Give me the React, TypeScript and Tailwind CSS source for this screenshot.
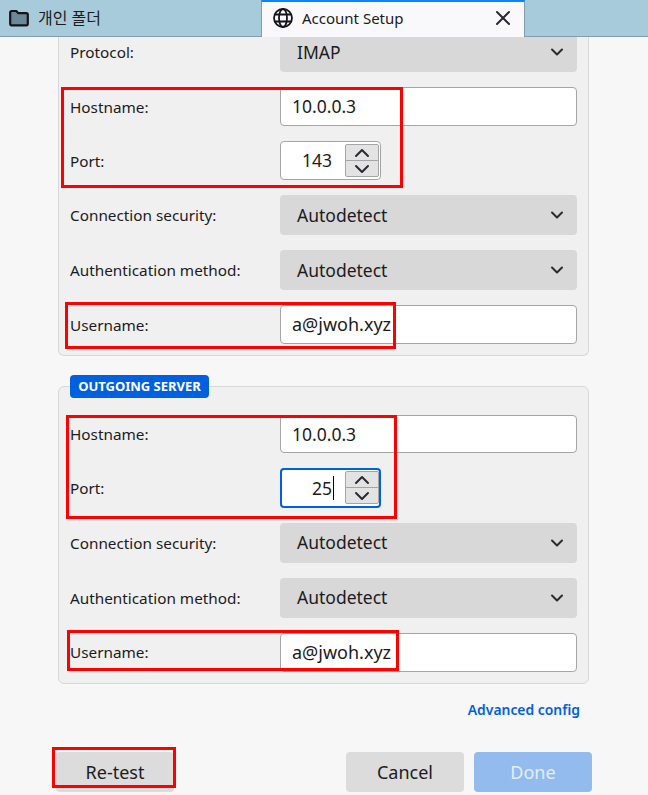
import { ChevronDown, ChevronUp, X } from "lucide-react";

const font = "[font-family:'Noto_Sans','Noto_Sans_CJK_KR',sans-serif]";

function Row({ label, children }: { label: string; children: React.ReactNode }) {
    return (
        <div className="flex items-center">
            <div className="w-[221px] shrink-0 pl-[11px] pt-[1px] text-[15.3px] text-[#1c1b22]">{label}</div>
            {children}
        </div>
    );
}

function SelectBox({ value }: { value: string }) {
    return (
        <div className="flex h-10 w-[297px] items-center justify-between rounded-[4px] bg-[#d8d8d8] pl-[17px] pr-[10px] text-[17.5px] text-[#1c1b22]">
            <span>{value}</span>
            <ChevronDown className="h-5 w-5 shrink-0 text-[#2b2a33]" strokeWidth={2.4} />
        </div>
    );
}

function TextBox({ value, className }: { value: string; className: string }) {
    return (
        <div className={"flex w-[297px] items-center rounded-[4px] border border-[#a5a5a5] bg-white pl-[11px] text-[#1c1b22] " + className}>
            {value}
        </div>
    );
}

function PortBox({ value, focused }: { value: string; focused?: boolean }) {
    return (
        <div
            className={
                focused
                    ? "flex h-[39.5px] w-[101px] items-center justify-between rounded-[4px] border-2 border-[#0060df] bg-white text-[17.5px] text-[#1c1b22]"
                    : "flex h-[39px] w-[101px] items-center justify-between rounded-[4px] border border-[#a5a5a5] bg-white pr-[1px] text-[17.5px] text-[#1c1b22]"
            }
        >
            <div className={focused ? "flex flex-1 items-center justify-end pr-[11px]" : "flex flex-1 items-center justify-end pr-[13px]"}>
                <span>{value}</span>
                {focused && <span className="ml-[1px] h-[24px] w-px bg-black" />}
            </div>
            <div className="flex h-[33px] w-[34px] flex-col rounded-[2px] border border-[#a5a5a5] bg-[#e3e3e3]">
                <div className="flex flex-1 items-center justify-center overflow-hidden border-b border-[#a5a5a5]">
                    <ChevronUp className="h-6 w-6 shrink-0 text-[#2b2a33]" strokeWidth={2} />
                </div>
                <div className="flex flex-1 items-center justify-center overflow-hidden">
                    <ChevronDown className="h-6 w-6 shrink-0 text-[#2b2a33]" strokeWidth={2} />
                </div>
            </div>
        </div>
    );
}

function RedBox({ className }: { className: string }) {
    return <div className={"pointer-events-none absolute border-[3px] border-[#fe0000] " + className} />;
}

export default function App() {
    return (
        <div className={"relative flex h-[795px] w-[648px] flex-col overflow-hidden bg-[#f7f7f7] " + font}>
            <div className="z-10 flex h-[37px] shrink-0 border-b border-[#7f9fb0] bg-[#a7cbdb]">
                <div className="flex h-[36px] w-[261px] items-center pl-[9px]">
                    <svg width="20" height="18" viewBox="0 0 20 18">
                        <path d="M1.2 3.5a1.5 1.5 0 0 1 1.5-1.5h4.6l2 2.2h8a1.5 1.5 0 0 1 1.5 1.5v9.1a1.5 1.5 0 0 1-1.5 1.5H2.7a1.5 1.5 0 0 1-1.5-1.5z" fill="#6b8a99" stroke="#15141a" strokeWidth="2.2" />
                    </svg>
                    <span className="ml-[9px] text-[16px] text-[#1c1b22]">개인 폴더</span>
                </div>
                <div className="flex h-[37px] w-[264px] items-center border-x border-t-2 border-x-[#7f9fb0] border-t-[#0a84ff] bg-[#f9f9fb] pb-[3px] pl-[11px] pr-[15px]">
                    <svg width="20" height="20" viewBox="0 0 20 20" fill="none" stroke="#15141a" strokeWidth="1.8">
                        <circle cx="10" cy="10" r="9" />
                        <ellipse cx="10" cy="10" rx="4" ry="9" />
                        <path d="M2 6.5h16M2 13.5h16" />
                    </svg>
                    <span className="ml-[9px] flex-1 pt-[1px] text-[15px] text-[#1c1b22]">Account Setup</span>
                    <X className="-mx-[6px] h-6 w-6 text-[#2b2a33]" strokeWidth={2} />
                </div>
            </div>

            <div className="mx-[58px] -mt-[5px] w-[531px] rounded-b-[6px] border border-t-0 border-[#d8d8dc] bg-[#f0f0f0]">
                <div className="flex flex-col gap-[15px] pb-[11px]">
                    <Row label="Protocol:"><SelectBox value="IMAP" /></Row>
                    <Row label="Hostname:"><TextBox value="10.0.0.3" className="h-[39px] text-[17.5px]" /></Row>
                    <Row label="Port:"><PortBox value="143" /></Row>
                    <Row label="Connection security:"><SelectBox value="Autodetect" /></Row>
                    <Row label="Authentication method:"><SelectBox value="Autodetect" /></Row>
                    <Row label="Username:"><TextBox value="a@jwoh.xyz" className="h-[39px] text-[18px]" /></Row>
                </div>
            </div>

            <div className="relative mx-[58px] mt-[30px] w-[531px] rounded-[6px] border border-[#d8d8dc] bg-[#f0f0f0] pt-[28px]">
                <div className="absolute -top-[12px] left-[11px] flex h-[23px] w-[139px] items-center justify-center rounded-[4px] bg-[#0060df] text-[13px] font-bold text-white">
                    OUTGOING SERVER
                </div>
                <div className="flex flex-col gap-[15px] pb-[11px]">
                    <Row label="Hostname:"><TextBox value="10.0.0.3" className="h-[38px] text-[17.5px]" /></Row>
                    <Row label="Port:"><PortBox value="25" focused /></Row>
                    <Row label="Connection security:"><SelectBox value="Autodetect" /></Row>
                    <Row label="Authentication method:"><SelectBox value="Autodetect" /></Row>
                    <Row label="Username:"><TextBox value="a@jwoh.xyz" className="h-[39px] text-[18px]" /></Row>
                </div>
            </div>

            <div className="mr-[68px] mt-[16px] text-right text-[13.9px] font-semibold text-[#0060df]">Advanced config</div>

            <div className="mt-[31.5px] flex pl-[56px] pr-[56px] text-[18px]">
                <div className="flex h-10 w-[118px] items-center justify-center rounded-[4px] bg-[#dcdcdc] pt-[1px] text-[#1c1b22]">Re-test</div>
                <div className="ml-auto flex h-10 w-[118px] items-center justify-center rounded-[4px] bg-[#dcdcdc] pt-[1px] text-[#1c1b22]">Cancel</div>
                <div className="ml-[10px] flex h-10 w-[118px] items-center justify-center rounded-[4px] bg-[#93bbed] pt-[1px] text-[#e4edf9]">Done</div>
            </div>

            <RedBox className="left-[61px] top-[87px] h-[101px] w-[342px]" />
            <RedBox className="left-[65px] top-[302px] h-[47px] w-[331px]" />
            <RedBox className="left-[66px] top-[415px] h-[104px] w-[331px]" />
            <RedBox className="left-[67px] top-[630px] h-[41px] w-[332px]" />
            <RedBox className="left-[52px] top-[747px] h-[41px] w-[124px]" />
        </div>
    );
}
